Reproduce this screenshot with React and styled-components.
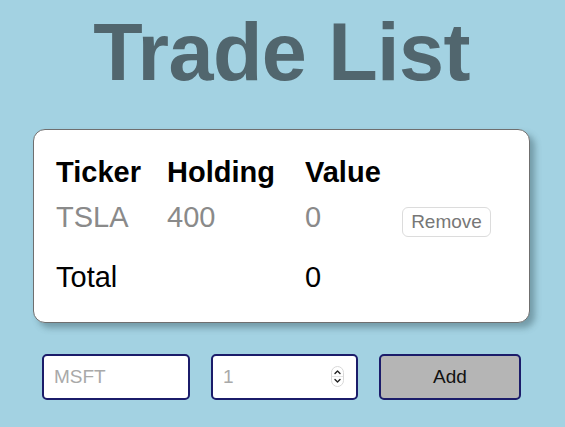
import React, { useState } from 'react';
import styled, { createGlobalStyle } from 'styled-components';

const GlobalStyle = createGlobalStyle`
  body {
    margin: 0;
    background: #a3d2e2;
    font-family: 'Liberation Sans', Arial, sans-serif;
  }
`;

const Page = styled.div`
  display: flex;
  flex-direction: column;
  align-items: center;
  min-height: 427px;
  padding-right: 2px;
`;

const Title = styled.h1`
  margin: 12px 0 37px;
  font-size: 81px;
  line-height: 80px;
  font-weight: 700;
  color: #51666e;
  letter-spacing: -0.6px;
`;

const Card = styled.div`
  width: 497px;
  box-sizing: border-box;
  padding: 20px 22px 22px;
  background: #fff;
  border: 1px solid #6f6f6f;
  border-radius: 12px;
  box-shadow: 5px 5px 6px rgba(60, 90, 100, 0.45);
`;

const Row = styled.div`
  display: grid;
  grid-template-columns: 111px 138px 97px auto;
  align-items: center;
  height: 45px;
  line-height: 45px;
  font-size: 29px;
  font-weight: ${(p) => (p.head ? 700 : 400)};
  color: ${(p) => (p.muted ? '#8a8a8a' : '#000')};
  margin-top: ${(p) => (p.gap ? '15px' : '0')};
`;

const RemoveButton = styled.button`
  align-self: end;
  margin-bottom: 3px;
  width: 89px;
  height: 30px;
  padding: 0;
  background: #fff;
  border: 1px solid #dcdcdc;
  border-radius: 6px;
  font-family: inherit;
  font-size: 19px;
  line-height: 28px;
  color: #777;
  cursor: pointer;
`;

const Form = styled.div`
  display: flex;
  gap: 21px;
  margin-top: 31px;
`;

const Field = styled.div`
  position: relative;
  display: flex;
`;

const Input = styled.input`
  width: ${(p) => p.w}px;
  height: 46px;
  box-sizing: border-box;
  padding: 0 10px;
  border: 2px solid #1b1c6a;
  border-radius: 5px;
  background: #fff;
  font-family: inherit;
  font-size: 19px;
  outline: none;
  -moz-appearance: textfield;
  &::placeholder {
    color: #a9a9a9;
  }
  &::-webkit-inner-spin-button,
  &::-webkit-outer-spin-button {
    -webkit-appearance: none;
    margin: 0;
  }
`;

const Spinner = styled.svg`
  position: absolute;
  right: 14px;
  top: 12px;
  pointer-events: none;
`;

const AddButton = styled.button`
  width: 142px;
  height: 46px;
  background: #b5b5b5;
  border: 2px solid #1b1c6a;
  border-radius: 5px;
  font-family: inherit;
  font-size: 19px;
  color: #111;
  cursor: pointer;
`;

const SpinIcon = () => (
  <Spinner width='13' height='21' viewBox='0 0 13 21'>
    <rect x='0.5' y='0.5' width='12' height='20' rx='6' fill='#fff' stroke='#d8d8d8' />
    <line x1='1' y1='10.5' x2='12' y2='10.5' stroke='#e6e6e6' />
    <path d='M4 7.5 L6.5 5 L9 7.5' fill='none' stroke='#222' strokeWidth='1.4' strokeLinecap='round' strokeLinejoin='round' />
    <path d='M4 13.5 L6.5 16 L9 13.5' fill='none' stroke='#222' strokeWidth='1.4' strokeLinecap='round' strokeLinejoin='round' />
  </Spinner>
);

const App = () => {
  const [trades] = useState([{ ticker: 'TSLA', holding: 400, value: 0 }]);
  const total = trades.reduce((sum, t) => sum + t.value, 0);

  return (
    <Page>
      <GlobalStyle />
      <Title>Trade List</Title>
      <Card>
        <Row head>
          <span>Ticker</span>
          <span>Holding</span>
          <span>Value</span>
        </Row>
        {trades.map((t) => (
          <Row muted key={t.ticker}>
            <span>{t.ticker}</span>
            <span>{t.holding}</span>
            <span>{t.value}</span>
            <RemoveButton>Remove</RemoveButton>
          </Row>
        ))}
        <Row gap>
          <span>Total</span>
          <span />
          <span>{total}</span>
        </Row>
      </Card>
      <Form>
        <Input w={148} placeholder='MSFT' />
        <Field>
          <Input w={147} type='number' placeholder='1' />
          <SpinIcon />
        </Field>
        <AddButton>Add</AddButton>
      </Form>
    </Page>
  );
};

export default App;
